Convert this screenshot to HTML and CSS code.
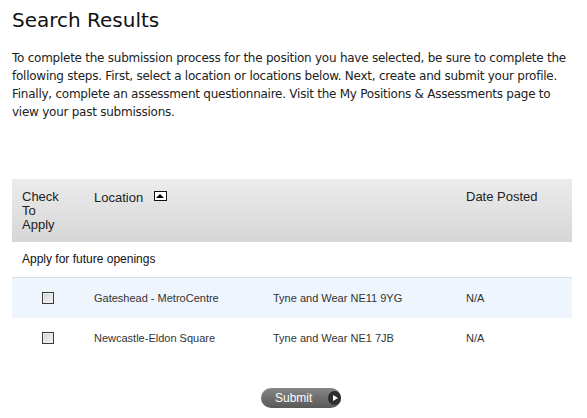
FILE: index.html
```html
<!DOCTYPE html>
<html>
<head>
<link rel="stylesheet" href="styles.css">
</head>
<body>

<div class="page">
  <h1 class="page-title">Search Results</h1>
  <p class="intro">To complete the submission process for the position you have selected, be sure to complete the following steps. First, select a location or locations below. Next, create and submit your profile. Finally, complete an assessment questionnaire. Visit the My Positions &amp; Assessments page to view your past submissions.</p>

  <table class="results">
    <thead>
      <tr>
        <th class="col-check">Check<br>To<br>Apply</th>
        <th class="col-loc">Location <span class="sort-icon"></span></th>
        <th class="col-addr"></th>
        <th class="col-date">Date Posted</th>
      </tr>
    </thead>
    <tbody>
      <tr class="group-row">
        <td colspan="4">Apply for future openings</td>
      </tr>
      <tr class="item-row alt">
        <td class="col-check"><span class="check-box"></span></td>
        <td>Gateshead - MetroCentre</td>
        <td>Tyne and Wear NE11 9YG</td>
        <td>N/A</td>
      </tr>
      <tr class="item-row">
        <td class="col-check"><span class="check-box"></span></td>
        <td>Newcastle-Eldon Square</td>
        <td>Tyne and Wear NE1 7JB</td>
        <td>N/A</td>
      </tr>
    </tbody>
  </table>

  <div class="actions">
    <button class="submit-btn">Submit <span class="go-icon"></span></button>
  </div>
</div>

</body>
</html>
```

FILE: styles.css
```css
body {
  margin: 0;
  background: #fff;
}

.page {
  padding: 8px 12px 0 12px;
  width: 560px;
}

.page-title {
  font-family: "DejaVu Sans", sans-serif;
  font-weight: normal;
  font-size: 20px;
  color: #111;
  margin: 0 0 17px 0;
  line-height: 24px;
}

.intro {
  font-family: "DejaVu Sans", sans-serif;
  font-size: 12px;
  line-height: 18px;
  letter-spacing: -0.25px;
  color: #222;
  margin: 0 0 58px 0;
  width: 560px;
}

.results {
  width: 560px;
  border-collapse: collapse;
  font-family: "Liberation Sans", Arial, sans-serif;
}

.results thead tr {
  background: linear-gradient(#ececec, #d6d6d6);
}

.results th {
  font-weight: normal;
  font-size: 13px;
  line-height: 14px;
  color: #222;
  text-align: left;
  vertical-align: top;
  padding: 11px 0 9px 0;
  height: 42px;
}

.results th.col-check {
  padding-left: 10px;
  width: 72px;
}

.results th.col-loc {
  padding-top: 12px;
  width: 179px;
}

.results th.col-addr {
  width: 193px;
}

.sort-icon {
  display: inline-block;
  width: 11px;
  height: 8px;
  border: 1px solid #111;
  background: #fff;
  margin-left: 7px;
  position: relative;
  vertical-align: 1px;
}

.sort-icon::after {
  content: "";
  position: absolute;
  left: 1.5px;
  top: 1.5px;
  border-left: 4px solid transparent;
  border-right: 4px solid transparent;
  border-bottom: 4px solid #000;
  width: 0;
  height: 0;
}

.group-row td {
  font-size: 12px;
  color: #111;
  padding: 10px 10px 11px 10px;
  height: 14px;
  border-bottom: 1px solid #d5dde6;
}

.item-row td {
  font-size: 11px;
  color: #333;
  height: 40px;
  padding: 0;
  vertical-align: middle;
}

.item-row.alt td {
  background: #eef5fc;
}

.item-row td.col-check {
  padding-left: 30px;
}

.check-box {
  display: block;
  width: 10px;
  height: 10px;
  border: 1px solid #3c3c3c;
  background: linear-gradient(135deg, #d2d4d4, #f6f6f6);
  box-shadow: inset 0 0 0 1px #eee;
}

.actions {
  text-align: center;
  padding-top: 30px;
  padding-left: 18px;
}

.submit-btn {
  font-family: "Liberation Sans", Arial, sans-serif;
  font-size: 12px;
  color: #fff;
  border: none;
  border-radius: 10px;
  background: linear-gradient(#858585, #595959);
  height: 20px;
  width: 80px;
  padding: 0 0 0 14px;
  text-align: left;
  display: inline-flex;
  align-items: center;
  gap: 16px;
}

.go-icon {
  display: inline-block;
  width: 14px;
  height: 14px;
  border-radius: 50%;
  background: #2e2e2e;
  position: relative;
}

.go-icon::after {
  content: "";
  position: absolute;
  left: 5px;
  top: 3.5px;
  border-top: 3.5px solid transparent;
  border-bottom: 3.5px solid transparent;
  border-left: 5px solid #fff;
}
```
